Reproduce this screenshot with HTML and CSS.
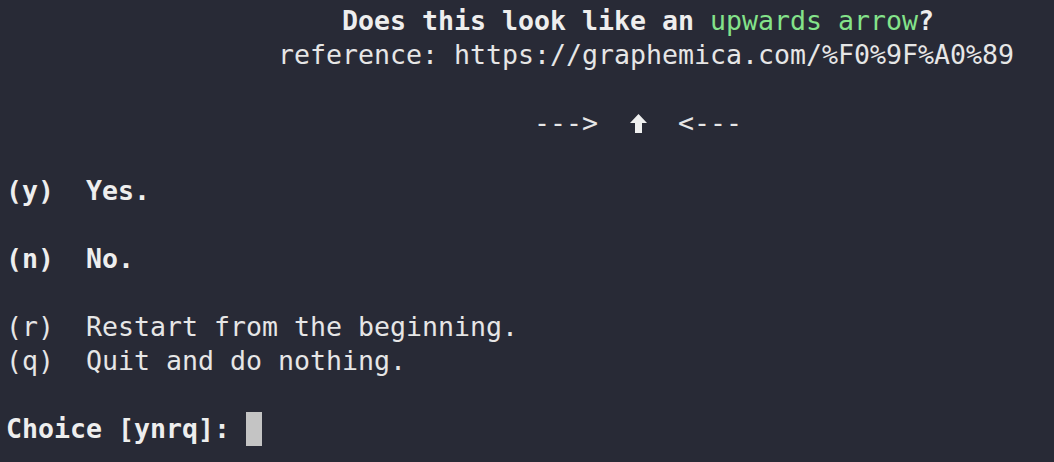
FILE: index.html
```html
<!DOCTYPE html>
<html>
<head>
<meta charset="utf-8">
<link rel="stylesheet" href="styles.css">
</head>
<body>
<pre class="term"><b>                     Does this look like an </b><span class="green">upwards arrow</span><b>?</b>
                 reference: https://graphemica.com/%F0%9F%A0%89

                                 ---&gt;  <span class="arrow"><svg width="17" height="19" viewBox="0 0 17 19"><path d="M8.5 0 L17 9 L12 9 L12 19 L5 19 L5 9 L0 9 Z" fill="#efefef"/></svg></span>  &lt;---

<b>(y)  Yes.</b>

<b>(n)  No.</b>

(r)  Restart from the beginning.
(q)  Quit and do nothing.

<b>Choice [ynrq]: </b><span class="cursor"></span></pre>
</body>
</html>
```

FILE: styles.css
```css
html, body {
  margin: 0;
  padding: 0;
  background: #282a36;
}
body {
  width: 1054px;
  height: 462px;
  overflow: hidden;
}
.term {
  margin: 0;
  padding: 4px 0 0 6px;
  font-family: "DejaVu Sans Mono", monospace;
  font-size: 26.58px;
  line-height: 34px;
  color: #e6e6e6;
  white-space: pre;
}
.term b {
  font-weight: bold;
  color: #eeeeee;
}
.green {
  color: #84e38a;
}
.arrow {
  display: inline-block;
  width: 1ch;
  vertical-align: -1px;
}
.arrow svg {
  display: block;
  margin-right: -1px;
}
.cursor {
  display: inline-block;
  width: 16px;
  height: 34px;
  background: #c4c4c4;
  vertical-align: top;
}
```
